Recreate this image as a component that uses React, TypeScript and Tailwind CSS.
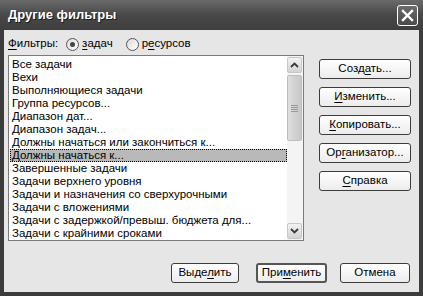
import React from "react";

const items = [
  "Все задачи",
  "Вехи",
  "Выполняющиеся задачи",
  "Группа ресурсов...",
  "Диапазон дат...",
  "Диапазон задач...",
  "Должны начаться или закончиться к...",
  "Должны начаться к...",
  "Завершенные задачи",
  "Задачи верхнего уровня",
  "Задачи и назначения со сверхурочными",
  "Задачи с вложениями",
  "Задачи с задержкой/превыш. бюджета для...",
  "Задачи с крайними сроками",
];

// label with one underlined mnemonic letter
const Mn: React.FC<{ pre: string; u: string; post: string }> = ({ pre, u, post }) => (
  <span>
    {pre}
    <span className="underline underline-offset-2">{u}</span>
    {post}
  </span>
);

const Btn: React.FC<{ children: React.ReactNode; w: string; def?: boolean }> = ({ children, w, def }) => (
  <div
    className={`flex items-center justify-center h-[20px] rounded-[3px] bg-gradient-to-b from-white to-[#ececec] text-black ${w} ${
      def ? "border-2 border-[#555]" : "border border-[#3c3c3c]"
    }`}
  >
    {children}
  </div>
);

const Radio: React.FC<{ checked?: boolean }> = ({ checked }) => (
  <div className="w-[13px] h-[13px] rounded-full border border-[#555] bg-gradient-to-br from-[#dcdcdc] to-white flex items-center justify-center">
    {checked && <div className="w-[5px] h-[5px] rounded-full bg-[#444]" />}
  </div>
);

export default function App() {
  return (
    <div className="w-[423px] h-[296px] flex flex-col bg-[#3c3c3c] font-['Liberation_Sans',sans-serif] text-[11.5px] text-black overflow-hidden">
      {/* Title bar */}
      <div className="h-[30px] flex items-center justify-between pl-[8px] pr-[5px] bg-gradient-to-b from-[#6a6a6a] via-[#484848] to-[#3e3e3e]">
        <span className="text-white font-bold text-[13px] [text-shadow:1px_1px_0_#1a1a1a]">Другие фильтры</span>
        <div className="w-[21px] h-[21px] rounded-[3px] border border-white bg-gradient-to-b from-[#6c6c6c] to-[#4a4a4a] flex items-center justify-center">
          <svg width="13" height="13" viewBox="0 0 13 13">
            <path d="M2 2 L11 11 M11 2 L2 11" stroke="white" strokeWidth="2.4" strokeLinecap="square" />
          </svg>
        </div>
      </div>

      {/* Client area */}
      <div className="flex-1 mx-[4px] mb-[4px] bg-[#e6e6e6] flex flex-col">
        {/* filter type row */}
        <div className="h-[14px] mt-[7px] ml-[4px] flex items-center">
          <Mn pre="" u="Ф" post="ильтры:" />
          <div className="ml-[8px]">
            <Radio checked />
          </div>
          <span className="ml-[3px]">
            <Mn pre="" u="з" post="адач" />
          </span>
          <div className="ml-[13px]">
            <Radio />
          </div>
          <span className="ml-[3px]">
            <Mn pre="р" u="е" post="сурсов" />
          </span>
        </div>

        <div className="flex mt-[4px]">
          {/* list box */}
          <div className="ml-[4px] w-[296px] h-[186px] border border-[#7a7a7a] bg-white flex">
            <div className="flex-1 pt-[2px] pl-[1px]">
              {items.map((it, i) => (
                <div
                  key={it}
                  className={`h-[13px] leading-[13px] pl-[2px] whitespace-nowrap ${
                    i === 7 ? "bg-[#b9b9b9] outline-1 outline-dotted outline-black -outline-offset-1" : ""
                  }`}
                >
                  {it}
                </div>
              ))}
            </div>
            {/* scrollbar */}
            <div className="w-[16px] flex flex-col py-[1px] pr-[1px] bg-[#f4f4f4]">
              <div className="h-[16px] rounded-[2px] border border-[#c8c8c8] bg-gradient-to-b from-[#f2f2f2] to-[#d4d4d4] flex items-center justify-center">
                <svg width="9" height="6" viewBox="0 0 9 6">
                  <path d="M1 5 L4.5 1.5 L8 5" stroke="#3a3a3a" strokeWidth="1.8" fill="none" />
                </svg>
              </div>
              <div className="h-[66px] mt-[2px] rounded-[2px] border border-[#bdbdbd] bg-gradient-to-r from-[#e0e0e0] via-[#d2d2d2] to-[#c8c8c8] flex flex-col items-center justify-center gap-[1px]">
                <div className="w-[7px] h-[1px] bg-[#9a9a9a]" />
                <div className="w-[7px] h-[1px] bg-[#9a9a9a]" />
                <div className="w-[7px] h-[1px] bg-[#9a9a9a]" />
                <div className="w-[7px] h-[1px] bg-[#9a9a9a]" />
              </div>
              <div className="flex-1" />
              <div className="h-[16px] rounded-[2px] border border-[#c8c8c8] bg-gradient-to-b from-[#f2f2f2] to-[#d4d4d4] flex items-center justify-center">
                <svg width="9" height="6" viewBox="0 0 9 6">
                  <path d="M1 1 L4.5 4.5 L8 1" stroke="#3a3a3a" strokeWidth="1.8" fill="none" />
                </svg>
              </div>
            </div>
          </div>

          {/* side buttons */}
          <div className="ml-[15px] pt-[4px] flex flex-col gap-[8px]">
            <Btn w="w-[92px]">
              <Mn pre="Созд" u="а" post="ть..." />
            </Btn>
            <Btn w="w-[92px]">
              <Mn pre="" u="И" post="зменить..." />
            </Btn>
            <Btn w="w-[92px]">
              <Mn pre="" u="К" post="опировать..." />
            </Btn>
            <Btn w="w-[92px]">
              <Mn pre="Ор" u="г" post="анизатор..." />
            </Btn>
            <Btn w="w-[92px]">
              <Mn pre="" u="С" post="правка" />
            </Btn>
          </div>
        </div>

        {/* bottom buttons */}
        <div className="mt-[22px] mr-[9px] flex justify-end">
          <Btn w="w-[68px]">
            <Mn pre="Выде" u="л" post="ить" />
          </Btn>
          <div className="ml-[17px]">
            <Btn w="w-[71px]" def>
              <Mn pre="При" u="м" post="енить" />
            </Btn>
          </div>
          <div className="ml-[13px]">
            <Btn w="w-[70px]">Отмена</Btn>
          </div>
        </div>
      </div>
    </div>
  );
}
